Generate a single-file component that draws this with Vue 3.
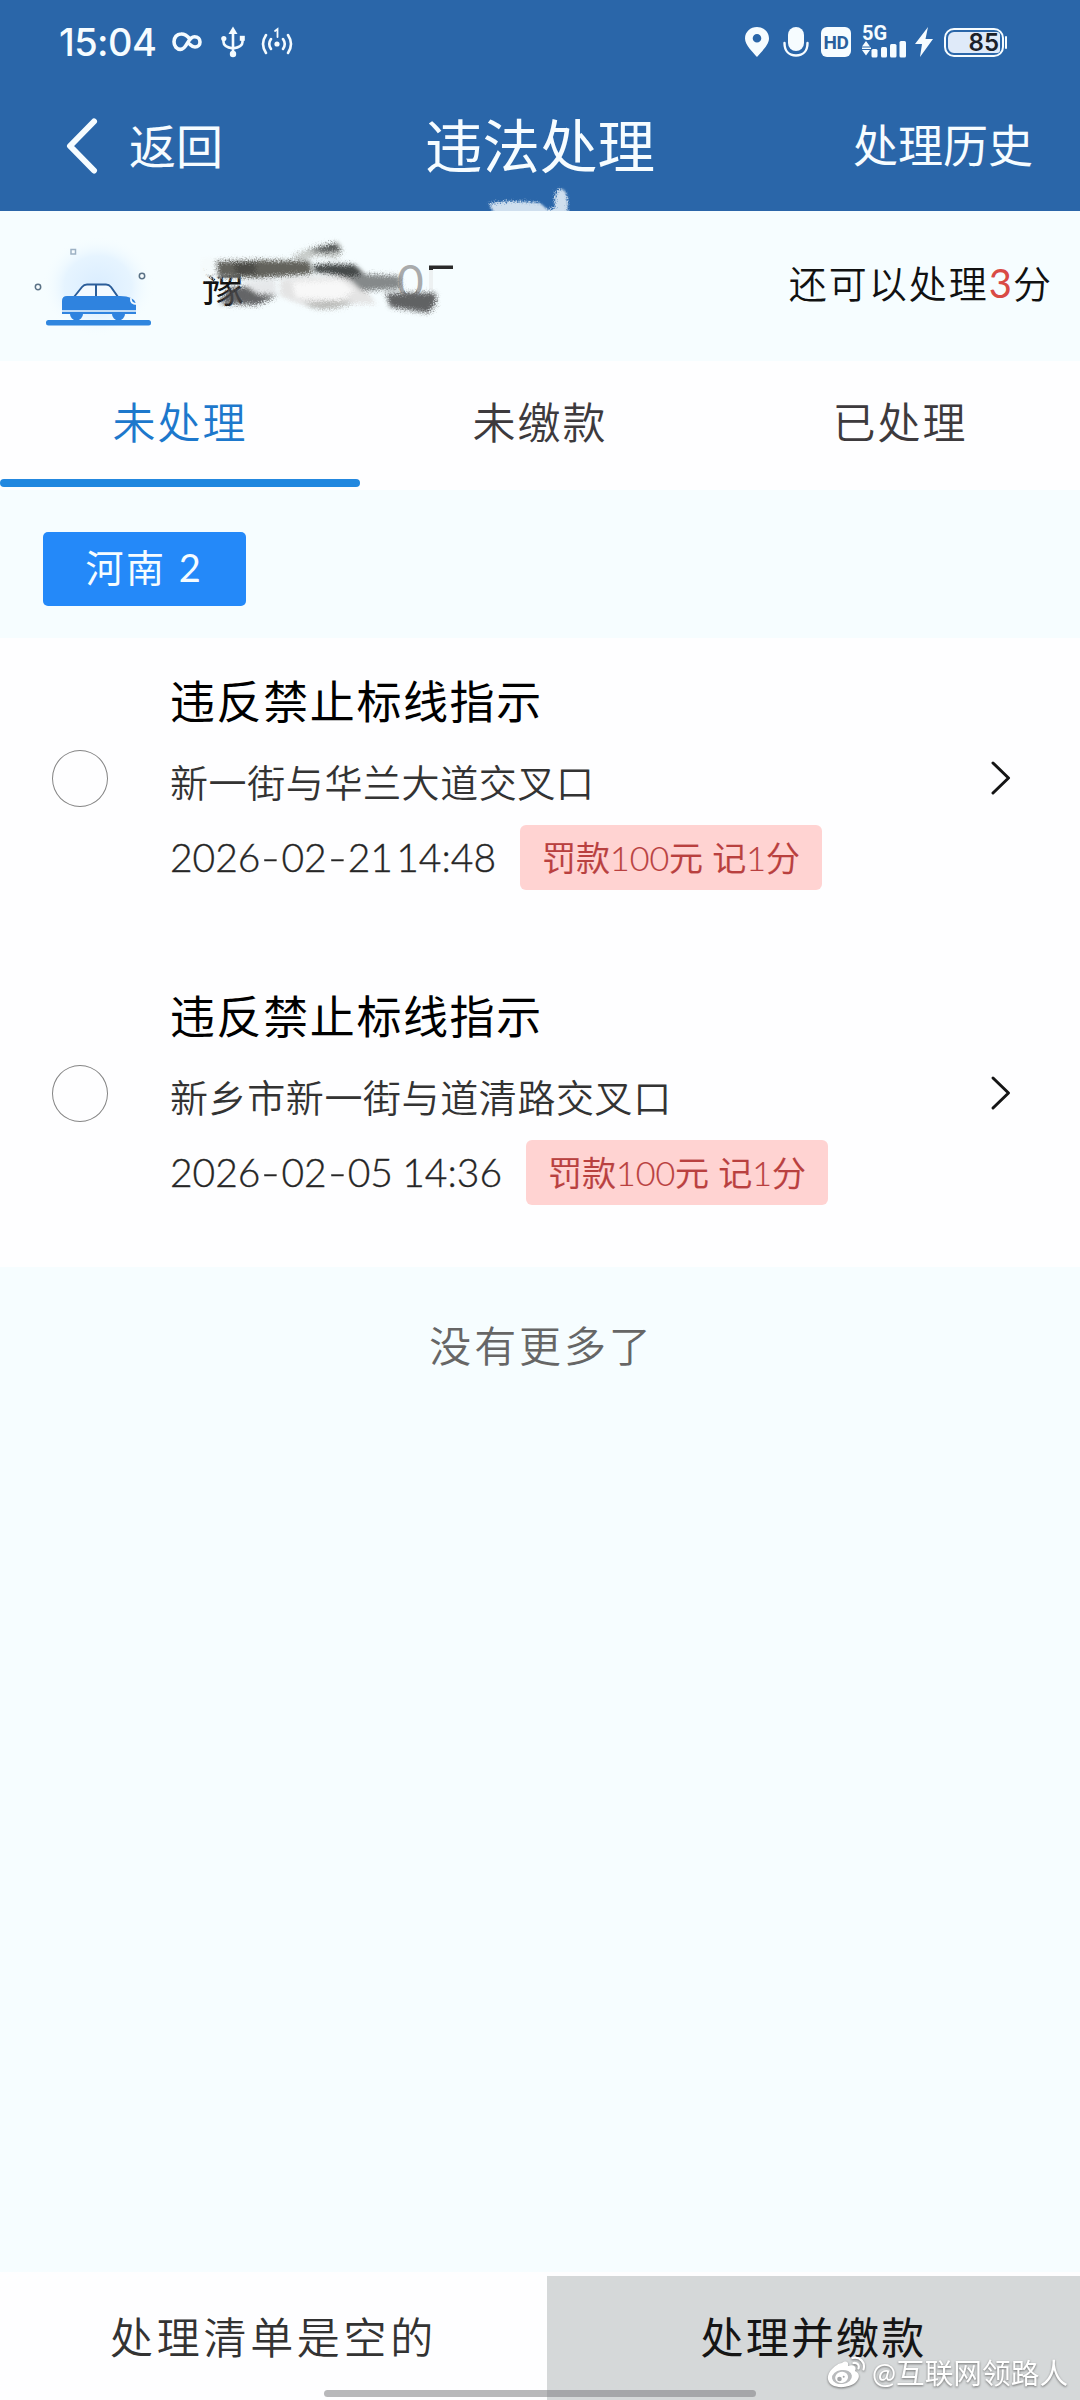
<script setup>
const tabs = [
  { label: '未处理', active: true },
  { label: '未缴款', active: false },
  { label: '已处理', active: false },
]
const violations = [
  { title: '违反禁止标线指示', place: '新一街与华兰大道交叉口', day: ['2026', '02', '21'], time: '14:48', tag: '罚款100元 记1分', width: 326 },
  { title: '违反禁止标线指示', place: '新乡市新一街与道清路交叉口', day: ['2026', '02', '05'], time: '14:36', tag: '罚款100元 记1分', width: 332 },
]
</script>

<template>
  <div class="page">
    <header class="header">
      <div class="status">
        <div class="status-left">
          <span class="clock">15:04</span>
          <svg class="ic-inf" width="30" height="20" viewBox="0 0 30 20" fill="none" stroke="#f4fbff" stroke-width="3.6" stroke-linecap="round">
            <path d="M17.5 6.5C14.5 2.8 11.8 1.900 9 2C4.800 2 2 5.300 2 9.800C2 14.300 4.800 17.400 8.600 17.400C15 17.400 15.500 4.800 22.500 4.800C26 4.800 28 7.200 28 10C28 12.800 26 15 23 15C21 15 19.500 14 18 12.500" />
          </svg>
          <svg class="ic-usb" width="24" height="32" viewBox="0 0 24 32" fill="none" stroke="#f4fbff" stroke-width="2.600">
            <path d="M12 6V27M2.500 13V16C2.500 20 6 21.500 12 22.500C18 21.500 21.500 20 21.500 16V13" />
            <path d="M12 .5L16.500 8H7.500Z" fill="#f4fbff" stroke="none" />
            <circle cx="12" cy="28" r="3.200" fill="#f4fbff" stroke="none" />
            <circle cx="2.800" cy="12.500" r="2.600" fill="#f4fbff" stroke="none" />
            <rect x="18.800" y="9.800" width="5" height="5" fill="#f4fbff" stroke="none" />
          </svg>
          <svg class="ic-hot" width="32" height="30" viewBox="0 0 32 30" fill="none" stroke="#f4fbff" stroke-width="2.600" stroke-linecap="round">
            <path d="M5 8Q-1 17 5 26M10 12Q6.500 17 10 22M27 8Q33 17 27 26M22 12Q25.500 17 22 22" />
            <path d="M14 4L16.500 2V10" stroke-width="1.800" />
            <circle cx="16" cy="17" r="2.600" fill="#f4fbff" stroke="none" />
          </svg>
        </div>
        <div class="status-right">
          <svg width="24" height="32" viewBox="0 0 24 32"><path fill="#f6fcff" fill-rule="evenodd" d="M12 1C5.500 1 0 5.800 0 12.400C0 19 8 26 12 31C16 26 24 19 24 12.400C24 5.800 18.500 1 12 1ZM12 8A4.300 4.300 0 1 1 12 16.600A4.300 4.300 0 1 1 12 8Z" /></svg>
          <svg class="ic-mic" width="26" height="32" viewBox="0 0 26 32"><rect x="5" y="1" width="16" height="24" rx="8" fill="#f6fcff" /><path d="M1.500 17C1.500 25 6 29.500 13 29.500S24.500 25 24.500 17" fill="none" stroke="#f6fcff" stroke-width="2.400" stroke-linecap="round" /></svg>
          <span class="hd">HD</span>
          <div class="signal">
            <span class="g5">5G</span>
            <svg width="46" height="17" viewBox="0 0 46 17" fill="#f6fcff"><path d="M5 0L9 5.500H1ZM5 14.500L1 9H9Z" /><rect x="1" y="6.500" width="9" height="1.500" /><rect x="10.500" y="8" width="6" height="8.500" rx="1.500" /><rect x="20" y="6" width="6" height="10.500" rx="1.500" /><rect x="29" y="3" width="6.500" height="13.500" rx="1.500" /><rect x="38.500" y="0" width="6.500" height="16.500" rx="1.500" /></svg>
          </div>
          <svg class="ic-bolt" width="18" height="30" viewBox="0 0 18 30"><path d="M13 0L0 17H7L5 30L18 12H10.500Z" fill="#f6fcff" /></svg>
          <div class="battery"><span>85</span></div>
        </div>
      </div>
      <nav class="nav">
        <div class="nav-back">
          <svg width="32" height="56" viewBox="0 0 32 56" fill="none" stroke="#f6fcff" stroke-width="6" stroke-linecap="round" stroke-linejoin="round"><path d="M28 3.500L4 28L28 52.500" /></svg>
          <span>返回</span>
        </div>
        <h1>违法处理</h1>
        <span class="nav-history">处理历史</span>
      </nav>
      <svg class="header-smear" width="84" height="30" viewBox="0 0 84 30">
        <defs>
          <filter id="grain0" x="-20%" y="-20%" width="140%" height="140%">
            <feGaussianBlur stdDeviation="1.200" result="b" />
            <feTurbulence type="fractalNoise" baseFrequency="0.7" numOctaves="2" result="n" />
            <feDisplacementMap in="b" in2="n" scale="7" />
          </filter>
        </defs>
        <g filter="url(#grain0)" fill="#cfdfee">
          <path d="M3 23Q22 18 54 22L62 29L69 26Q67 10 74 8Q84 7 81 36H10Z" />
        </g>
      </svg>
    </header>

    <section class="vehicle">
      <svg class="car" width="130" height="110" viewBox="0 0 130 110">
        <defs>
          <radialGradient id="halo" cx="0.500" cy="0.500" r="0.500"><stop offset="0" stop-color="#daedff" /><stop offset="0.600" stop-color="#e6f4ff" /><stop offset="1" stop-color="#f6fdff" stop-opacity="0" /></radialGradient>
        </defs>
        <ellipse cx="68" cy="53" rx="56" ry="50" fill="url(#halo)" />
        <g fill="#f8fdff" stroke="#5b7286" stroke-width="1.500">
          <circle cx="8" cy="54" r="2.700" /><circle cx="112" cy="43" r="2.700" /><rect x="41" y="16.500" width="4.500" height="4.500" stroke="#9db1c4" />
        </g>
        <path d="M44 64L52 54Q54 51.500 57 51.500H76Q79 51.500 81 54L88 64Z" fill="#f4faff" stroke="#2b5d99" stroke-width="2" />
        <path d="M66 52V64" stroke="#2b5d99" stroke-width="2" />
        <path d="M32 68Q32 63 37 63H90Q104 63 106 71V81H32Z" fill="#2f83df" />
        <path d="M32 78H106" stroke="#f3faff" stroke-width="1.500" />
        <path d="M101 65Q100 71 107 71" fill="none" stroke="#f3faff" stroke-width="1.800" />
        <path d="M40 81A6.500 6.500 0 0 0 53 81ZM82 81A6.500 6.500 0 0 0 95 81Z" fill="#2f83df" />
        <rect x="16" y="87" width="105" height="5.500" rx="2.500" fill="#2f86df" />
      </svg>
      <div class="plate">
        <span class="plate-region">豫</span>
        <span class="plate-tail">0</span>
        <svg class="plate-smear" width="270" height="100" viewBox="0 0 270 100">
          <defs>
            <filter id="grain1" x="-20%" y="-30%" width="140%" height="160%">
              <feGaussianBlur stdDeviation="2" result="b" />
              <feTurbulence type="fractalNoise" baseFrequency="0.750" numOctaves="2" result="n" />
              <feDisplacementMap in="b" in2="n" scale="8" />
            </filter>
          </defs>
          <path d="M229 33.500H253V37H233V44H229Z" fill="#2a2a2a" />
          <path d="M229 38H233V58H229Z" fill="#edf1f2" />
          <g filter="url(#grain1)">
            <path d="M0 26H54L54 46H0Z" fill="#f5fbfc" />
            <path d="M80 48Q110 42 158 46L168 60L176 72Q160 72 150 72Q124 80 100 72L80 64Z" fill="#e4e4e4" />
            <path d="M92 50L140 48L154 58L140 68L96 66Z" fill="#f8f8f8" />
            <path d="M104 71L132 69L154 70Q136 80 112 76Z" fill="#b9bab7" />
            <path d="M44 50L76 47V64L50 66Z" fill="#e6e8ea" />
            <path d="M28 56L46 54L58 62L78 63L58 73L20 72Z" fill="#4a4b4c" fill-opacity=".85" />
            <path d="M16 29L56 28L110 29L112 42L60 46L18 45Z" fill="#62625b" />
            <path d="M34 31L56 29L56 42L36 44Z" fill="#4b4b46" />
            <path d="M92 24Q112 14 138 10Q146 20 136 27L120 24L98 29Z" fill="#c6cac8" />
            <path d="M108 18L136 11L142 19L124 21Z" fill="#4f5352" />
            <path d="M114 33Q130 31 155 33L164 42L158 50Q136 42 114 40Z" fill="#454848" />
            <path d="M148 46L164 42L200 44L201 57L162 59Z" fill="#85898a" />
            <path d="M186 62Q210 60 236 61Q238 74 228 81L190 75Z" fill="#606263" />
          </g>
        </svg>
      </div>
      <div class="quota">还可以处理<b>3</b>分</div>
    </section>

    <div class="tabs">
      <div v-for="t in tabs" :key="t.label" class="tab" :class="{ active: t.active }">{{ t.label }}</div>
    </div>

    <div class="region"><span class="chip">河南 2</span></div>

    <main class="list">
      <article v-for="v in violations" :key="v.place" class="item">
        <span class="radio"></span>
        <div class="info">
          <h2>{{ v.title }}</h2>
          <p class="place">{{ v.place }}</p>
          <div class="meta">
            <span class="date" :style="{ width: v.width + 'px' }">
              <span>{{ v.day[0] }}<i>-</i>{{ v.day[1] }}<i>-</i>{{ v.day[2] }}</span>
              <span>{{ v.time }}</span>
            </span>
            <span class="tag">{{ v.tag }}</span>
          </div>
        </div>
        <svg class="arrow" width="22" height="38" viewBox="0 0 22 38" fill="none" stroke="#151515" stroke-width="3" stroke-linecap="round" stroke-linejoin="round"><path d="M3 4L18.500 19L3 34" /></svg>
      </article>
    </main>

    <div class="more">没有更多了</div>

    <footer class="footer">
      <div class="empty">处理清单是空的</div>
      <div class="pay">处理并缴款</div>
      <div class="home"></div>
      <div class="mark">
        <svg width="40" height="34" viewBox="0 0 40 34">
          <path d="M15 7C19 4 22 6 21 10C27 8 30 11 28 15C33 17 33 22 29 26C24 31 12 33 5 29C-1 25 0 18 5 13C8 10 12 7 15 7Z" fill="#fff" />
          <ellipse cx="15" cy="21" rx="10" ry="7" fill="#b9bbbd" transform="rotate(-8 15 21)" />
          <ellipse cx="14.500" cy="21.500" rx="6.500" ry="5.500" fill="#fff" transform="rotate(-15 14 21)" />
          <circle cx="12.500" cy="23" r="2.300" fill="#a5a7a9" /><circle cx="16.700" cy="20.700" r="1" fill="#a5a7a9" />
          <path d="M25.500 2C33 .5 38.500 6 36.500 13.500M26.500 7C30.500 6.500 32.500 9 31.500 12.500" fill="none" stroke="#fff" stroke-width="2.200" stroke-linecap="round" />
        </svg>
        <span>@互联网领路人</span>
      </div>
    </footer>
  </div>
</template>

<style>
body { margin: 0; }
</style>

<style scoped>
.page {
  display: flex;
  flex-direction: column;
  width: 1080px;
  height: 2400px;
  overflow: hidden;
  background: #f6fdff;
  font-family: Lato, "Noto Sans CJK SC", sans-serif;
  font-weight: 350;
  color: #111;
  white-space: nowrap;
}
.header { position: relative; height: 211px; background: #2a66a9; color: #f6fcff; }
.status { display: flex; justify-content: space-between; height: 82px; padding: 0 73px 0 59px; }
.status-left, .status-right { display: flex; align-items: center; height: 84px; }
.clock { width: 100px; font: 500 38px/46px Inter, sans-serif; letter-spacing: -0.6px; }
.ic-inf { margin-left: 13px; }
.ic-usb { margin-left: 19px; }
.ic-hot { margin-left: 16px; }
.ic-mic { margin-left: 14px; }
.hd { width: 30px; height: 30px; margin-left: 12px; border-radius: 6px; background: #f6fcff; color: #2a5f9c; font: 700 19px/31px Roboto, sans-serif; letter-spacing: -0.5px; text-align: center; }
.signal { display: flex; flex-direction: column; width: 46px; height: 32px; margin-left: 10px; }
.g5 { height: 15px; padding-left: 1px; font: 700 20px/15px Roboto, sans-serif; }
.ic-bolt { margin-left: 8px; }
.battery { position: relative; box-sizing: border-box; width: 60px; height: 29px; margin-left: 11px; margin-right: 3px; border: 2px solid #f6fcff; border-radius: 10px; padding: 2px; }
.battery::after { content: ""; position: absolute; right: -5px; top: 6px; width: 2px; height: 13px; border-radius: 2px; background: #f6fcff; }
.battery span { display: block; height: 21px; border-radius: 6px 3px 3px 6px; background: #dfeaf9; color: #1b2129; font: 600 24px/22px Inter, sans-serif; text-align: right; padding-right: 1px; }
.nav { display: grid; grid-template-columns: 1fr auto 1fr; align-items: center; height: 129px; padding: 0 47px 0 66px; font-weight: 400; }
.nav-back { display: flex; align-items: center; gap: 31px; font-size: 47px; line-height: 60px; transform: translateY(-1px); }
h1 { margin: 0 19px 0 0; font-size: 57.500px; font-weight: 400; line-height: 70px; transform: translateY(-1px); }
.nav-history { justify-self: end; font-size: 45px; line-height: 60px; transform: translateY(-1px); }
.header-smear { position: absolute; left: 486px; bottom: 0; }
.vehicle { display: flex; align-items: center; height: 150px; background: #f6fdff; }
.car { margin: 4px 0 0 30px; }
.plate { position: relative; width: 270px; height: 90px; margin: 0 0 18px 40px; }
.plate-region { position: absolute; left: 2px; top: 29px; font-size: 42px; line-height: 50px; font-weight: 400; }
.plate-tail { position: absolute; left: 197px; top: 24px; font-size: 46px; line-height: 50px; font-weight: 400; color: #a9abac; }
.plate-smear { position: absolute; left: 0; top: 0; }
.quota { margin-left: auto; padding: 0 27px 7px 0; font-size: 38px; line-height: 50px; letter-spacing: 2px; color: #111; }
.quota b { font-weight: 400; font-size: 40px; letter-spacing: 1px; color: #d94b45; }
.tabs { display: flex; height: 129px; background: #fefeff; }
.tab { position: relative; flex: 1; height: 123px; font-size: 43px; line-height: 123px; letter-spacing: 2px; text-align: center; color: #3d3a3d; }
.tab.active { color: #1d78cc; }
.tab.active::after { content: ""; position: absolute; left: 0; right: 0; bottom: -3px; height: 8px; border-radius: 4px; background: #2388df; }
.region { height: 148px; }
.chip { display: block; width: 203px; height: 74px; margin: 42px 0 0 43px; border-radius: 5px; background: #2489f9; color: #f6fcff; font-size: 38px; line-height: 70px; font-weight: 400; letter-spacing: 2.500px; text-align: center; }
.list { height: 629px; background: #fefeff; }
.item { display: flex; height: 315px; }
.radio { box-sizing: border-box; width: 56px; height: 57px; margin: 112px 0 0 52px; border: 1.500px solid #858585; border-radius: 50%; }
.info { flex: 1; padding: 38px 0 0 62px; }
h2 { margin: 0; font-size: 45px; line-height: 53px; font-weight: 400; letter-spacing: 1.600px; color: #000; }
.place { margin: 27px 0 0; font-size: 38px; line-height: 52px; letter-spacing: 0.600px; color: #333; }
.meta { display: flex; align-items: center; height: 65px; margin-top: 17px; }
.date { display: flex; justify-content: space-between; font-size: 39px; line-height: 65px; font-weight: 300; color: #222; -webkit-text-stroke: 0.400px #333; }
.date i { display: inline-block; width: 21px; font-style: normal; text-align: center; transform: scaleX(1.300); }
.tag { box-sizing: border-box; width: 302px; height: 65px; margin-left: 24px; border-radius: 6px; background: #ffd3d2; color: #b9403f; font-size: 34px; line-height: 65px; text-align: center; -webkit-text-stroke: 0.200px #b9403f; }
.arrow { margin: 121px 68px 0 0; }
.more { height: 60px; margin-top: 51px; padding-left: 3px; font-size: 42px; line-height: 56px; letter-spacing: 2.900px; text-align: center; color: #666; }
.footer { position: relative; display: flex; height: 128px; margin-top: auto; background: #fefeff; }
.empty { width: 547px; font-size: 43px; line-height: 132px; letter-spacing: 3.700px; text-align: center; color: #333; }
.pay { box-sizing: border-box; flex: 1; margin-top: 4px; background: #d5d8d9; font-size: 43px; line-height: 124px; letter-spacing: 2.200px; text-align: center; font-weight: 400; color: #151515; }
.home { position: absolute; left: 324px; bottom: 3px; width: 432px; height: 7px; border-radius: 4px; background: rgba(125, 125, 130, 0.550); }
.mark { position: absolute; left: 827px; top: 82px; display: flex; align-items: center; gap: 5px; color: #fff; font-size: 28.700px; line-height: 38px; font-weight: 400; filter: drop-shadow(0 1px 1px rgba(70, 70, 70, 0.700)); }
</style>
